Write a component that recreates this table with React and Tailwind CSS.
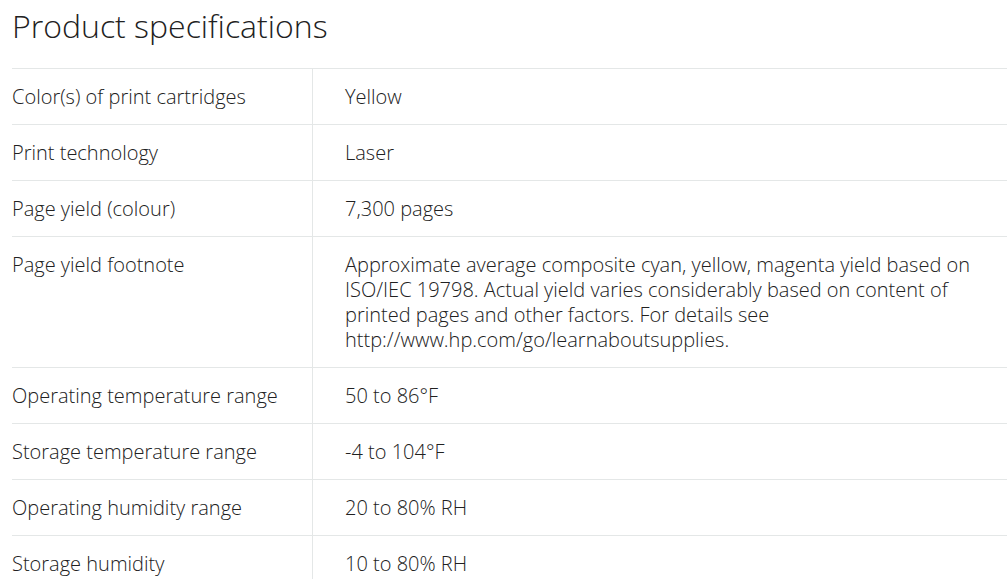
import React from 'react';

const specs = [
    ['Color(s) of print cartridges', 'Yellow'],
    ['Print technology', 'Laser'],
    ['Page yield (colour)', '7,300 pages'],
    [
        'Page yield footnote',
        'Approximate average composite cyan, yellow, magenta yield based on ISO/IEC 19798. Actual yield varies considerably based on content of printed pages and other factors. For details see http://www.hp.com/go/learnaboutsupplies.',
    ],
    ['Operating temperature range', '50 to 86°F'],
    ['Storage temperature range', '-4 to 104°F'],
    ['Operating humidity range', '20 to 80% RH'],
    ['Storage humidity', '10 to 80% RH'],
];

function App() {
    return (
        <div className="min-h-screen w-full bg-white pl-3 text-[#212121] font-['Open_Sans',sans-serif] font-light">
            <h1 className="pt-[2px] text-[32px] leading-[48px]">Product specifications</h1>

            <div className="mt-[18px] border-t border-[#e4e7e7]">
                {specs.map(([label, value]) => (
                    <div key={label} className="grid grid-cols-[301px_1fr] border-b border-[#e4e7e7] text-[20px] leading-[25px]">
                        <div className="border-r border-[#e4e7e7] py-[15px] pr-4">{label}</div>
                        <div className="py-[15px] pl-[32px] pr-3">{value}</div>
                    </div>
                ))}
            </div>
        </div>
    );
}

export default App;
